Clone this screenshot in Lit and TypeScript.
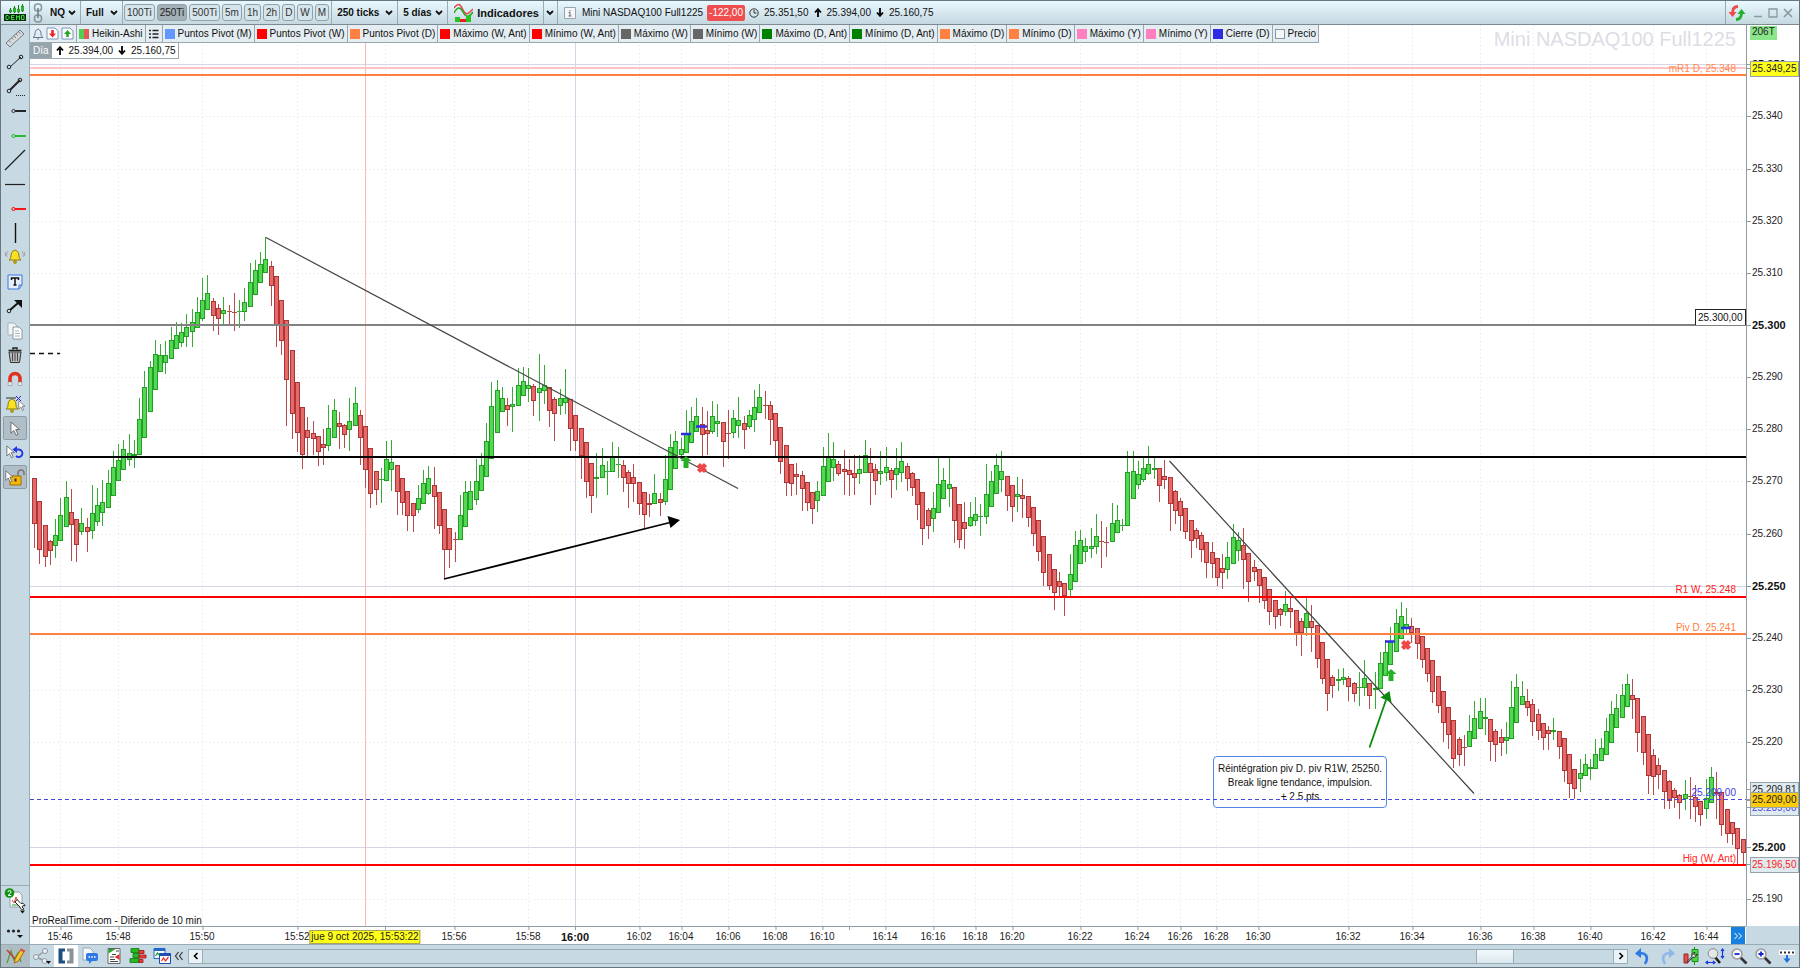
import { LitElement, html, svg, css } from "lit";
import { customElement } from "lit/decorators.js";
import { classMap } from "lit/directives/class-map.js";
import { styleMap } from "lit/directives/style-map.js";

/* Plot coordinate space shared by the canvas and the label overlays. */
const PLOT = { left: 30, top: 25, width: 1716, height: 901 };
const VIEWBOX = `${PLOT.left} ${PLOT.top} ${PLOT.width} ${PLOT.height}`;
const priceY = (price: number) => 325 + (25300 - price) * 5.215;
const px = (x: number) => `${((x - PLOT.left) / PLOT.width) * 100}%`;
const py = (y: number) => `${((y - PLOT.top) / PLOT.height) * 100}%`;

/* Heikin-Ashi bars: colour, high, body top, body bottom, low — in thirds of a unit below the block's top. */
const BLOCKS: { top: number; bars: string }[] = [
  {
    top: 220,
    bars: `r775,775,911,983 r843,843,989,1033 r916,916,1010,1040 r960,962,993,1035 g896,944,979,1013 g835,886,962,962
    g784,832,922,922 r806,877,914,1022 r896,898,976,1025 g863,910,937,944 r894,922,937,996 g796,880,932,957
    g803,855,906,917 g781,847,880,918 g751,790,863,863 g694,742,827,827 g672,720,784,784 g660,686,751,751
    g643,698,720,738 g660,701,709,743 g533,598,704,704 g452,500,653,653 g424,441,577,577 g359,402,509,509
    g373,405,455,455 g362,405,430,461 g322,359,416,416 g306,346,388,388 g308,337,368,380 g283,322,352,380
    g268,306,337,380 g232,275,323,323 g174,241,298,304 g165,219,269,269 r234,244,287,332 r253,264,296,346
    g231,269,281,314 r255,274,277,314 r218,275,278,332 g240,274,277,324 g204,247,275,302 g128,187,262,262
    g120,151,226,226 g95,132,188,188 g52,118,160,160 r123,137,197,257 r168,168,314,380 r241,241,363,405
    r300,300,481,617 r391,391,583,656 r487,487,638,695 r562,562,704,746 r590,631,653,709 r603,640,658,704
    r648,648,695,738 r627,672,683,735 g556,624,678,692 g538,571,653,653 r576,609,622,687 r612,615,644,684
    g534,603,630,692 g500,550,619,619 r571,585,653,735 r619,619,751,803 r683,683,822,864 r754,754,811,856
    g743,778,781,848 g662,717,782,782 g660,726,751,813 r736,736,816,886 r775,775,848,886 r812,812,889,932
    r848,850,889,935 g796,835,869,878 g751,790,853,853 g737,773,822,826 r741,796,832,926 r815,815,917,943
    r866,866,989,1076 r925,925,990,1044 r935,958,961,1025 g826,886,959,959 g784,816,922,922 g784,813,869,869
    g716,784,841,855`,
  },
  {
    top: 340,
    bars: `g340,374,454,454 g250,304,412,412 g125,199,357,357 g120,151,279,279 g142,174,217,217 r173,196,211,257
    g142,192,202,277 g84,136,199,199 g81,123,169,169 g84,136,146,186 r132,139,182,227 g43,145,160,243
    g75,136,152,191 r142,142,212,262 r172,177,222,302 g146,175,199,226 g88,174,188,223 r178,178,268,333
    r225,225,304,333 r264,264,349,417 r307,307,427,474 r368,368,469,518 g340,412,418,473 g325,374,415,415
    g362,393,396,465 g306,352,395,395 g322,372,375,415 r360,374,415,457 r390,397,433,503 r373,412,433,487
    r425,425,493,524 r457,457,524,564 r463,489,495,532 g402,460,492,492 r460,478,490,527 g344,418,485,494
    g283,321,451,451 g274,304,386,386 g295,328,344,348 g210,283,338,338 g201,244,310,310 g174,227,275,275
    r201,253,284,347 r213,270,283,344 g182,227,275,283 g193,243,251,290 r247,247,307,382 r210,279,282,357
    g210,235,279,293 g171,241,259,293 r229,250,271,327 g211,226,260,268 g151,200,241,276 g131,172,220,220
    r153,195,198,237 r183,196,241,314 r220,220,304,347 r262,262,367,402 r314,314,428,468 r371,371,433,468
    r370,402,412,466 r394,406,448,513 r427,427,490,513 r457,457,506,552 g424,454,482,515 g321,379,467,467
    g280,352,425,425 g307,357,385,424 r362,371,403,409 r331,386,397,466 r358,391,406,468 r346,400,413,465
    g346,388,403,433 g300,344,398,398 r323,370,400,495 r373,386,422,464`,
  },
  {
    top: 420,
    bars: `g93,152,163,194 g80,142,160,182 r145,150,180,233 g85,145,166,209 g66,124,158,185 r130,139,177,213
    r156,160,203,229 r178,178,256,299 r217,217,328,374 r263,271,317,357 g215,265,296,335 g112,193,280,280
    g144,181,236,236 g113,193,208,262 r202,202,304,368 r252,252,359,383 r247,305,326,388 g247,290,317,322
    g230,283,304,317 g252,289,292,347 g132,223,292,313 g153,184,260,260 g102,136,221,221 g94,153,180,215
    r167,169,227,272 r196,196,262,307 g170,223,230,277 r176,226,236,293 r229,229,293,322 r260,260,341,377
    r299,299,395,422 r347,347,458,497 r401,401,497,509 r448,448,518,569 r455,482,500,530 r490,490,527,587
    g401,463,509,527 g334,376,487,487 g331,359,433,433 g353,379,397,425 g325,377,388,413 g283,349,382,403
    r302,364,367,443 r322,366,368,412 g250,308,367,367 g254,299,338,338 g296,314,319,334 g94,156,317,317
    g94,153,236,236 g123,163,196,208 g113,145,179,185 g79,133,163,166 g113,145,149,178 r145,145,197,247
    r121,169,179,208 r172,172,253,332 r211,212,272,313 r235,244,287,332 r263,263,335,357 r299,299,362,413
    r323,331,356,383 r337,346,391,427 r367,367,428,473 r367,395,433,473 r415,415,473,497 r401,443,458,506
    g367,412,450,476`,
  },
  {
    top: 440,
    bars: `g253,292,373,373 g277,301,334,364 r265,316,359,446 r339,339,427,485 r361,380,395,424 r388,388,437,488
    r412,412,482,506 r446,446,516,556 r481,481,530,567 r503,506,524,559 g453,493,517,527 r472,505,516,563
    r511,511,580,617 r535,544,580,647 g472,520,565,589 r496,544,563,635 r556,556,657,683 r605,605,716,731
    r658,658,761,814 r706,710,738,774 g686,718,724,753 g683,710,721,734 r707,715,741,784 r727,730,761,787
    g695,742,745,797 g661,715,744,767 r730,730,767,806 g695,744,749,808 g637,670,746,746 g601,637,707,707
    g562,605,674,674 g508,550,637,637 g487,529,596,596 g505,552,565,580 r535,559,578,610 r565,565,611,656
    r589,589,661,683 r625,625,701,725 r661,661,755,788 r709,709,797,818 r752,752,850,905 r802,802,885,926
    r841,841,956,985 r892,898,944,978 r886,921,923,978 g824,874,921,921 g782,835,896,896 g773,814,866,866
    g773,832,838,884 r836,836,907,964 r866,872,916,965 r866,892,910,947 g847,892,902,943 g724,802,898,898
    g703,741,850,850 g724,769,795,795 r746,784,803,828 r778,791,845,887 r808,823,874,900 r848,848,895,930
    r857,871,883,930 g833,871,877,900 r874,874,920,958 r895,895,992,1025 r943,943,1031,1074 r986,986,1046,1078
    g958,1000,1017,1057`,
  },
  {
    top: 640,
    bars: `g342,372,409,409 g357,380,388,419 g298,341,386,386 g295,323,364,364 g233,274,344,344 g184,223,308,308
    g162,205,265,265 g131,166,235,235 g102,133,200,200 r118,166,181,238 r175,175,278,336 r228,228,338,376
    r282,282,409,461 r328,346,411,465 r353,376,406,446 r391,391,455,507 r421,423,482,507 r445,451,475,503
    r463,465,488,536 g419,463,476,511 r411,468,470,536 r436,472,502,545 r482,484,524,557 g416,473,506,536
    g381,411,490,490 r397,455,463,536 r455,457,554,587 r507,507,583,608 r545,545,583,614 r565,565,628,672
    r597,597,640,672`,
  },
];

interface Bar { up: boolean; x: number; high: number; top: number; bottom: number; low: number }

const BARS: Bar[] = BLOCKS.flatMap((block) =>
  block.bars.trim().split(/\s+/).map((token) => {
    const [high, top, bottom, low] = token.slice(1).split(",").map((v) => Math.round(block.top + Number(v) / 3));
    return { up: token[0] === "g", x: 0, high, top, bottom, low };
  }),
).map((bar, i) => ({ ...bar, x: Math.round(34 + i * 5.257) }));

const TIMES: [number, string][] = [
  [60, "15:46"], [118, "15:48"], [202, "15:50"], [297, "15:52"], [385, ""], [454, "15:56"], [528, "15:58"],
  [575, "16:00"], [639, "16:02"], [681, "16:04"], [728, "16:06"], [775, "16:08"], [822, "16:10"], [849, ""],
  [885, "16:14"], [933, "16:16"], [975, "16:18"], [1012, "16:20"], [1080, "16:22"], [1137, "16:24"],
  [1180, "16:26"], [1216, "16:28"], [1258, "16:30"], [1348, "16:32"], [1412, "16:34"], [1480, "16:36"],
  [1533, "16:38"], [1590, "16:40"], [1653, "16:42"], [1706, "16:44"],
];
const PRICES = Array.from({ length: 17 }, (_, i) => 25350 - i * 10);
const fmt = (price: number) => `25.${String(price - 25000)}`;

const LEGEND: [string, string][] = [
  ["Puntos Pivot (M)", "#6496ff"], ["Puntos Pivot (W)", "#ff0000"], ["Puntos Pivot (D)", "#ff8040"],
  ["Máximo (W, Ant)", "#ff0000"], ["Mínimo (W, Ant)", "#ff0000"], ["Máximo (W)", "#666666"],
  ["Mínimo (W)", "#666666"], ["Máximo (D, Ant)", "#008000"], ["Mínimo (D, Ant)", "#008000"],
  ["Máximo (D)", "#ff8040"], ["Mínimo (D)", "#ff8040"], ["Máximo (Y)", "#ff80c0"], ["Mínimo (Y)", "#ff80c0"],
  ["Cierre (D)", "#2c2ce0"], ["Precio", "transparent"],
];

const icon = (w: number, h: number, body: unknown) =>
  html`<svg width=${w} height=${h} viewBox="0 0 ${w} ${h}" fill="none" aria-hidden="true">${body}</svg>`;

const cursor = svg`<path d="M1 1v12l3-3 2.500 5 2-1-2.500-5h4z" fill="#fff" stroke="#666"/>`;
const bell = svg`<path d="M11 2c3 1 4 3 4 6 0 2 1 3 2 4H5c1-1 2-2 2-4 0-3 1-5 4-6z" fill="#fbe122" stroke="#8a7a10"/><circle cx="11" cy="14" r="1.500" fill="#c8a800" stroke="#8a7a10" stroke-width=".6"/>`;
const chevron = icon(8, 6, svg`<path d="M1 1l3 3 3-3" stroke="#111" stroke-width="1.800"/>`);
const arrowUp = icon(8, 9, svg`<path d="M4 9V3M1 4.500L4 1.200l3 3.300" stroke="#000" stroke-width="1.800"/>`);
const arrowDown = icon(8, 9, svg`<path d="M4 0v6M1 4.500l3 3.300 3-3.300" stroke="#000" stroke-width="1.800"/>`);

const TOOLS: { label: string; art: unknown; on?: boolean }[] = [
  { label: "Regla", art: icon(22, 22, svg`<path d="M2 16L16 3l4 4L6 20z" fill="#d5dade" stroke="#777"/><path d="M5 13.500l2 2M7.500 11l1.500 1.500M10 9l2 2M12 7l1.500 1.500M14.500 4.800l2 2" stroke="#777"/>`) },
  { label: "Segmento", art: icon(22, 22, svg`<path d="M6 16L17 6" stroke="#222"/><circle cx="5" cy="16" r="1.800" stroke="#222"/><circle cx="17" cy="6" r="1.800" stroke="#222"/>`) },
  { label: "Canal", art: icon(22, 22, svg`<path d="M6 14L16 4" stroke="#222" stroke-width="2"/><circle cx="5" cy="15" r="1.800" stroke="#222"/><circle cx="16" cy="4" r="1.800" stroke="#222"/><path d="M12 19.500h9" stroke="#222" stroke-dasharray="1 1"/>`) },
  { label: "Semirrecta", art: icon(22, 22, svg`<path d="M11 11h11" stroke="#111" stroke-width="1.800"/><circle cx="9.500" cy="11" r="1.600" stroke="#333"/>`) },
  { label: "Semirrecta verde", art: icon(22, 22, svg`<path d="M11 11h11" stroke="#1fb51f" stroke-width="1.800"/><circle cx="9.500" cy="11" r="1.600" stroke="#1fb51f"/>`) },
  { label: "Recta", art: icon(22, 22, svg`<path d="M1 21L21 1" stroke="#222" stroke-width="1.200"/>`) },
  { label: "Horizontal", art: icon(22, 22, svg`<path d="M1 11.500h20" stroke="#222" stroke-width="1.200"/>`) },
  { label: "Semirrecta roja", art: icon(22, 22, svg`<path d="M11 11h11" stroke="#f00" stroke-width="1.800"/><circle cx="9.500" cy="11" r="1.600" stroke="#f00"/>`) },
  { label: "Vertical", art: icon(22, 22, svg`<path d="M11.500 1v20" stroke="#111" stroke-width="1.400"/>`) },
  { label: "Alerta", art: icon(22, 18, svg`${bell}<path d="M4 3C2.500 5 2.500 7 3 9M1.500 4v4M18 3c1.500 2 1.500 4 1 6M20.500 4v4" stroke="#999" stroke-width=".8"/>`) },
  { label: "Texto", art: icon(22, 18, svg`<path d="M4 2h14v10l-3 4H4z" fill="#e4eefc" stroke="#3f74e0"/><path d="M18 12h-3v4" stroke="#3f74e0"/><path d="M7.500 7V5h7v2M11 5v7M9.500 12h3" stroke="#111" stroke-width="1.500"/>`) },
  { label: "Flecha", art: icon(22, 18, svg`<path d="M6 13l8-7" stroke="#111" stroke-width="2"/><path d="M10 3h8v8z" fill="#111"/><circle cx="5" cy="14" r="1.800" stroke="#222"/>`) },
  { label: "Copiar", art: icon(22, 18, svg`<path d="M4 1h6l3 3v9H4z" fill="#f2f5f7" stroke="#a7b2b9"/><path d="M9 5h6l3 3v9H9z" fill="#fff" stroke="#8c989f"/><path d="M11 9h4M11 11.500h5M11 14h5" stroke="#a7b2b9"/>`) },
  { label: "Eliminar", art: icon(22, 18, svg`<path d="M5 6h12l-1.500 10.500h-9z" fill="#bbb" stroke="#333"/><path d="M4.500 4.500h13M9 3.500V2h4v1.500" stroke="#222" stroke-width="1.500"/><path d="M8.500 7v8M11 7v8M13.500 7v8" stroke="#444"/>`) },
  { label: "Imán", art: icon(22, 18, svg`<path d="M6 12V8.500a5 5 0 0 1 10 0V12" stroke="#e0301f" stroke-width="3.600"/><path d="M4.200 12h3.600v3.500H4.200zM14.200 12h3.600v3.500h-3.600z" fill="#eee" stroke="#888" stroke-width=".6"/>`) },
  { label: "Alertas del gráfico", art: icon(22, 18, svg`<g transform="translate(-3 2)">${bell}</g><path d="M2 3h10" stroke="#333"/><path d="M12 1l5 5M17 1l-5 5" stroke="#22c"/><g transform="translate(14 5) scale(.7)">${cursor}</g>`) },
  { label: "Cursor", on: true, art: icon(22, 16, svg`<g transform="translate(6 1) scale(.95)">${cursor}</g>`) },
  { label: "Deshacer", art: icon(22, 16, svg`<g transform="translate(2 1) scale(.85)">${cursor}</g><path d="M10 5.500h5a3.800 3.800 0 1 1-3 6.500" stroke="#2433e8" stroke-width="1.900"/><path d="M13 2v7L8.500 5.500z" fill="#2433e8"/>`) },
  { label: "Bloquear", on: true, art: icon(22, 18, svg`<path d="M6 8h11v9H6z" fill="#f5b70c" stroke="#9c6f00"/><path d="M14 8V5a3 3 0 0 1 6 0v2" stroke="#777" stroke-width="1.600"/><path d="M11.500 10.500v3" stroke="#333" stroke-width="2"/><g transform="translate(1 2) scale(.8)">${cursor}</g>`) },
];

const lens = (extra: unknown) =>
  icon(18, 18, svg`<path d="M10.500 10.500l6 6" stroke="#333" stroke-width="2.600"/><circle cx="7" cy="7" r="5" fill="#f7f7f7" stroke="#999" stroke-width="1.500"/>${extra}`);

const BOTTOM_LEFT: { label: string; art: unknown; on?: boolean }[] = [
  { label: "Compartir", art: icon(20, 20, svg`<path d="M4 11l9-6M4 11l9 4" stroke="#8e9aa2" stroke-width="1.500"/><circle cx="4" cy="11" r="2.500" fill="#e8eef1" stroke="#8e9aa2"/><circle cx="13" cy="5" r="2.500" fill="#e8eef1" stroke="#8e9aa2"/><circle cx="12.500" cy="15" r="2.500" fill="#e8eef1" stroke="#8e9aa2"/><path d="M14 15h5l-2.500 3z" fill="#111"/>`) },
  { label: "Vista", on: true, art: icon(20, 20, svg`<path d="M9 2.500H2.500v15H9v-3H6.500v-9H9z" fill="#1d4f80"/><path d="M11 2.500h6.500v15H11v-3h2.500v-9H11z" fill="#8a9097"/>`) },
  { label: "Chat", art: icon(20, 20, svg`<path d="M3 2h7l3 3v9H3z" fill="#f6f9fb" stroke="#9aa8b0"/><rect x="6" y="7" width="12" height="8" rx="2" fill="#2f78e6"/><path d="M9 14v4l4-4z" fill="#2f78e6"/><path d="M8.500 11h1.500M11.300 11h1.500M14 11h1.500" stroke="#fff" stroke-width="1.500"/>`) },
  { label: "Noticias", art: icon(20, 20, svg`<path d="M4 2.500h12v15H4z" fill="#fff" stroke="#666"/><path d="M4.500 3h7l-7 4.500z" fill="#1ea51e"/><path d="M15.500 8v6l-5-3z" fill="#e03030"/><path d="M8 8.500h4M6 11h4M6 13.500h5M6 15.500h8M12 5h3" stroke="#444"/>`) },
  { label: "Libro de órdenes", art: icon(20, 20, svg`<path d="M3 2.500h8v4H3zM5 7.500h6v4H5zM2 12.500h9v4H2z" fill="#24b824" stroke="#0d7a0d" stroke-width=".8"/><path d="M11 4.500h5v3h-5zM11 9h7v3h-7zM11 13.500h4v3h-4z" fill="#e84040" stroke="#9a1010" stroke-width=".8"/>`) },
  { label: "Gráficos", art: icon(20, 20, svg`<path d="M2 2.500h11v10H2z" fill="#fff" stroke="#1e66c8"/><path d="M2 2.500h11v2.500H2z" fill="#1e66c8"/><path d="M3.500 10l2-3 2 2 2-2" stroke="#1ea51e" stroke-width="1.300"/><path d="M7.500 7.500h11v10h-11z" fill="#fff" stroke="#1e4fb0"/><path d="M7.500 7.500h11V10h-11z" fill="#1e4fb0"/><path d="M9.500 15l2-3 2 3 3-4" stroke="#e03030" stroke-width="1.300"/>`) },
];

const BOTTOM_RIGHT: { label: string; art: unknown }[] = [
  { label: "Deshacer", art: icon(18, 18, svg`<path d="M5 6.500c6-1 9 2 7.500 7.500-.3 1.200-1 2-2 2.500" stroke="#2b7ae6" stroke-width="2.600"/><path d="M7 1v10L1 6.500z" fill="#2b7ae6"/>`) },
  { label: "Rehacer", art: icon(18, 18, svg`<path d="M13 6.500c-6-1-9 2-7.500 7.500.3 1.200 1 2 2 2.500" stroke="#8fb8ea" stroke-width="2.600"/><path d="M11 1v10l6-4.500z" fill="#8fb8ea"/>`) },
  { label: "Configurar velas", art: icon(18, 18, svg`<path d="M2 7h4v9H2z" fill="#e25050" stroke="#a02020"/><path d="M12.500 0v18" stroke="#169016"/><path d="M10 2.500h6v12h-6z" fill="#49d649" stroke="#169016"/><path d="M5 14.500l5-5c-.5-2 .5-4 3-4L11.500 7l1.500 1.500L15 7c0 2.500-2 3.700-4 3.200l-5 5z" fill="#fff" stroke="#222"/>`) },
  { label: "Ajustar escala", art: icon(20, 18, svg`<path d="M10 10l5 6" stroke="#222" stroke-width="2.600"/><circle cx="8" cy="6.500" r="4.800" fill="#e6e6e6" stroke="#888"/><path d="M17.500 2v9M16 4l1.500-2L19 4M16 9l1.500 2L19 9M1 15.500h9M3 14l-2 1.500L3 17M8 14l2 1.500L8 17" stroke="#1a36e8" stroke-width="1.200"/>`) },
  { label: "Alejar", art: lens(svg`<path d="M4.500 7h5" stroke="#1226d8" stroke-width="1.800"/>`) },
  { label: "Acercar", art: lens(svg`<path d="M4.500 7h5M7 4.500v5" stroke="#1226d8" stroke-width="1.800"/>`) },
  { label: "Mostrar panel", art: icon(18, 18, svg`<path d="M1 3h16v5H1z" fill="#fff"/><path d="M2 5.500h15" stroke="#333" stroke-width="2" stroke-dasharray="2 2"/><path d="M9 8v5" stroke="#1e6fe0" stroke-width="2"/><path d="M5.500 11.500h7L9 16z" fill="#1e6fe0"/>`) },
];

const LEVELS: [number, string, number][] = [
  [68, "#ffc4c4", 2], [75, "#ff8040", 2], [325, "#828282", 2], [457, "#000", 2],
  [597, "#f00", 2], [634, "#ff8040", 2], [865, "#f00", 2],
];
const LEVEL_LABELS: [number, string, string][] = [
  [69, "mR1 D, 25.348", "#ff8a50"], [590, "R1 W, 25.248", "#f22"], [628, "Piv D. 25.241", "#ff8040"],
  [793, "25.209,00", "#3c3ce6"], [859, "Hig (W, Ant)", "#f22"],
];

@customElement("price-chart")
export class PriceChart extends LitElement {
  static styles = css`
    :host { position: relative; display: block; overflow: hidden; background: #fff; font: 10px/12px "Liberation Sans", Arial, sans-serif; color: #111; }
    .layer { position: absolute; inset: 0; width: 100%; height: 100%; }
    .label { position: absolute; right: 10px; transform: translateY(-50%); white-space: nowrap; }
    .watermark { position: absolute; top: 4px; right: 10px; font-size: 20px; line-height: 20px; color: #dcdde6; }
    .note { position: absolute; box-sizing: border-box; width: 174px; padding: 5px 0 3px; border: 1px solid #4f83e8; border-radius: 4px; background: #fff; line-height: 14px; text-align: center; }
    .tag { position: absolute; right: 0; box-sizing: border-box; width: 51px; padding: 2px 2px 1px; border: 1px solid #222; border-bottom: 0; background: #fff; transform: translateY(-100%); white-space: nowrap; }
    .source { position: absolute; left: 2px; bottom: 0; line-height: 10px; }
    .day { position: absolute; top: 17px; left: 0; display: flex; align-items: stretch; height: 15px; border: 1px solid #9aa7ae; border-left: 0; background: #fff; line-height: 15px; }
    .period { padding: 0 3px; background: #96a4ab; color: #fff; }
    .extremes { display: flex; align-items: center; gap: 5px; padding: 0 2px 0 4px; }
    .extremes svg { flex: none; }
    .grid { stroke: #e2e2e2; stroke-dasharray: 1 3; }
    .major { stroke: #d3d6e4; }
    .up { fill: #52d852; stroke: #249e24; }
    .down { fill: #e66a6a; stroke: #ac3636; }
    .wick-up { stroke: #38aa38; }
    .wick-down { stroke: #b84c4c; }
  `;

  private readonly bar = (b: Bar) => svg`
    <path class=${b.up ? "wick-up" : "wick-down"} d="M${b.x + 0.5} ${b.high}V${b.low}"/>
    ${b.bottom - b.top < 2
      ? svg`<path class=${b.up ? "wick-up" : "wick-down"} d="M${b.x - 2} ${b.top + 0.5}h5"/>`
      : svg`<rect class=${b.up ? "up" : "down"} x=${b.x - 1.5} y=${b.top + 0.5} width="4" height=${b.bottom - b.top - 1 || 1}/>`}`;

  private readonly entry = (x: number, y: number) =>
    svg`<path d="M${x} ${y - 6}l5.500 5h-3v7h-5v-7h-3z" fill="#26b026"/>`;

  private readonly exit = (x: number, y: number) =>
    svg`<path d="M${x - 3.5} ${y - 3.500}l7 7m0-7l-7 7" stroke="#f04848" stroke-width="4.500"/>`;

  render() {
    return html`
      <svg class="layer" viewBox=${VIEWBOX} preserveAspectRatio="none" shape-rendering="crispEdges" aria-hidden="true">
        ${PRICES.map((p) => svg`<path class=${p % 50 ? "grid" : "major"} d="M30 ${Math.round(priceY(p)) + 0.5}H1746"/>`)}
        ${TIMES.map(([x, t]) => svg`<path class=${t === "16:00" ? "major" : "grid"} d="M${x + 0.5} 25V926"/>`)}
      </svg>
      <div class="note" style=${styleMap({ left: px(1213), top: py(756) })}>Réintégration piv D. piv R1W, 25250.<br />Break ligne tendance, impulsion.<br />+ 2.5 pts</div>
      <svg class="layer" viewBox=${VIEWBOX} preserveAspectRatio="none" fill="none" role="img" aria-label="Mini NASDAQ100 Full1225, 250 ticks">
        <path d="M365.500 25V926" stroke="#ffb4b4"/>
        <path d="M30 353.500h30" stroke="#111" stroke-width="1.500" stroke-dasharray="5 4"/>
        <g shape-rendering="crispEdges">${BARS.map(this.bar)}</g>
        ${LEVELS.map(([y, color, w]) => svg`<path d="M30 ${w % 2 ? y + 0.5 : y}H1746" stroke=${color} stroke-width=${w}/>`)}
        <path d="M30 799.500H1746" stroke="#4646e0" stroke-dasharray="4 3"/>
        <path d="M266 237.500L738 488.500M1169.500 461L1474 793.500" stroke="#444" stroke-width="1.200"/>
        <path d="M444 579L672 522" stroke="#000" stroke-width="1.800"/>
        <path d="M680 520l-12.500-4 3 12z" fill="#000"/>
        <path d="M1369.500 747.500L1386 700" stroke="#0a8a0a" stroke-width="1.800"/>
        <path d="M1389.500 691l-9 6.500 11 5z" fill="#0a8a0a"/>
        <path d="M681 434h10M696 426.500h11M1385 641.500h10M1401 628h10" stroke="#2f2fe8" stroke-width="2.500"/>
        ${this.entry(686, 462)}${this.entry(1391, 675)}${this.exit(702, 468)}${this.exit(1406, 645)}
      </svg>
      ${LEVEL_LABELS.map(([y, text, color]) => html`<span class="label" style=${styleMap({ top: py(y), color })}>${text}</span>`)}
      <span class="tag" style=${styleMap({ top: py(325) })}>25.300,00</span>
      <span class="watermark">Mini NASDAQ100 Full1225</span>
      <span class="source">ProRealTime.com - Diferido de 10 min</span>
      <div class="day">
        <span class="period">Día</span>
        <span class="extremes">${arrowUp}<span>25.394,00</span>${arrowDown}<span>25.160,75</span></span>
      </div>
    `;
  }
}

@customElement("price-axis")
export class PriceAxis extends LitElement {
  static styles = css`
    :host { position: relative; display: block; border-left: 1px solid #8f9ca4; background: #fff; font: 10px/12px "Liberation Sans", Arial, sans-serif; color: #222; }
    .price { position: absolute; left: 5px; transform: translateY(-50%); }
    .price::before, .marker::before { content: ""; position: absolute; left: -5px; top: 6px; width: 4px; height: 1px; background: #8f9ca4; }
    .strong { font-size: 11px; font-weight: 700; color: #111; }
    .marker { position: absolute; left: 3px; right: 0; box-sizing: border-box; height: 16px; padding-left: 1px; border: 1px solid #96a3ab; background: #dfeaf0; line-height: 14px; white-space: nowrap; transform: translateY(-50%); }
    .yellow { background: #ffff18; color: #222; }
    .gold { background: #fccb0c; color: #222; }
    .blue { color: #4646e0; }
    .red { color: #f22; }
    .count { position: absolute; top: 1px; left: 3px; padding: 0 2px 2px; background: #8be58b; }
  `;

  private readonly marker = (y: number, text: string, tone: string) =>
    html`<span class="marker ${tone}" style=${styleMap({ top: py(y) })}>${text}</span>`;

  render() {
    return html`
      ${PRICES.map((p) => html`<span class=${classMap({ price: true, strong: p % 50 === 0 })} style=${styleMap({ top: py(priceY(p)) })}>${p === 25210 ? "" : fmt(p)}</span>`)}
      ${this.marker(790, "25.209,81", "")}
      ${this.marker(808, "25.209,00", "blue")}
      ${this.marker(800, "25.209,00", "gold")}
      ${this.marker(69, "25.349,25", "yellow")}
      ${this.marker(865, "25.196,50", "red")}
      <span class="count">206T</span>
    `;
  }
}

@customElement("time-axis")
export class TimeAxis extends LitElement {
  static styles = css`
    :host { position: relative; display: block; border-top: 1px solid #8f9ca4; background: #fff; font: 10px/12px "Liberation Sans", Arial, sans-serif; color: #222; }
    .time { position: absolute; top: 4px; transform: translateX(-50%); }
    .time::before { content: ""; position: absolute; left: 50%; top: -4px; width: 1px; height: 3px; background: #8f9ca4; }
    .strong { font-size: 11px; font-weight: 700; color: #111; }
    .moment { position: absolute; top: 3px; box-sizing: border-box; height: 14px; padding: 0 1px; border: 1px solid #a5a55a; background: #ffff18; color: #222; white-space: nowrap; transform: translateX(-50%); }
    .latest { position: absolute; top: 0; right: 1px; display: grid; place-items: center; width: 14px; height: 17px; padding: 0; border: 0; background: #1880e0; }
  `;

  render() {
    return html`
      ${TIMES.map(([x, t]) => html`<span class=${classMap({ time: true, strong: t === "16:00" })} style=${styleMap({ left: px(x) })}>${t}</span>`)}
      <span class="moment" style=${styleMap({ left: px(365) })}>jue 9 oct 2025, 15:53:22</span>
      <button class="latest" aria-label="Ir al final">${icon(10, 8, svg`<path d="M1.500 1l3 3-3 3M5.500 1l3 3-3 3" stroke="#fff"/>`)}</button>
    `;
  }
}

@customElement("app-root")
export class AppRoot extends LitElement {
  static styles = css`
    :host { display: block; font: 10px/12px "Liberation Sans", Arial, sans-serif; color: #111; }
    .window { display: grid; box-sizing: border-box; height: 100vh; grid-template: 24px minmax(0, 1fr) 18px 23px / 29px minmax(0, 1fr) 53px; border: 1px solid #67767f; background: #c7d9e2; }
    button, select, input { margin: 0; font: inherit; color: inherit; }
    svg { display: block; flex: none; }
    .bar { grid-column: 1 / -1; display: flex; align-items: stretch; border-bottom: 1px solid #7b8a93; background: linear-gradient(#e9f8ff, #c5d8e0); }
    .bar > * { border-right: 1px solid #9aabb4; }
    .brand { display: grid; place-items: center; box-sizing: border-box; width: 29px; }
    .plain { display: grid; place-items: center; padding: 0; border: 0; background: none; }
    .link { width: 15px; }
    .picker { display: grid; align-items: center; box-sizing: border-box; padding: 0 4px 0 5px; }
    .picker select { grid-area: 1 / 1; width: 100%; padding: 0; border: 0; appearance: none; background: none; font-weight: 700; }
    .picker svg { grid-area: 1 / 1; justify-self: end; pointer-events: none; }
    .w36 { width: 36px; }
    .w42 { width: 42px; }
    .w50 { width: 50px; }
    .w66 { width: 66px; }
    .frames { display: flex; align-items: center; gap: 2px; padding: 0 2px 0 1px; }
    .frame { box-sizing: border-box; height: 17px; padding: 0 2px; border: 1px solid #93a1a9; border-radius: 3px; background: #d5e5ec; color: #333; line-height: 15px; }
    .frame.on { background: #a3b0b7; color: #222; }
    .indicators { display: flex; align-items: center; gap: 4px; padding: 0 4px 0 6px; border-width: 0 1px 0 0; border-style: solid; background: none; font-size: 11px; font-weight: 700; }
    .more { width: 14px; border-right: 1px solid #9aabb4; }
    .quote { flex: 1; display: flex; align-items: center; gap: 5px; padding-left: 6px; }
    .info { margin-right: 1px; }
    .change { margin: 0 -1px; padding: 2px 2px; border-radius: 2px; background: #f04e4e; color: #fff; }
    .sync { width: 21px; }
    .controls { display: flex; align-items: center; border-right: 0; padding: 0 5px 0 5px; gap: 3px; }
    .controls .plain { width: 12px; height: 12px; }
    .tools { grid-row: 2 / 4; display: flex; flex-direction: column; justify-content: space-between; min-height: 0; box-sizing: border-box; border-right: 1px solid #9aabb4; background: #c7d9e2; }
    .drawing { flex: 0 1 464px; display: flex; flex-direction: column; justify-content: space-between; align-items: center; padding-top: 1px; box-sizing: border-box; }
    .tool { display: grid; place-items: center; box-sizing: border-box; width: 24px; height: 24px; padding: 0; border: 1px solid transparent; border-radius: 2px; background: none; }
    .tool.on { border-color: #8e9ca4; background: #b0bfc7; }
    .footer { display: flex; flex-direction: column; gap: 12px; align-items: center; height: 59px; padding-top: 2px; box-sizing: border-box; border-top: 1px solid #9aabb4; }
    .chart { position: relative; display: grid; min-width: 0; }
    .legend { position: absolute; top: 0; left: 0; display: flex; height: 17px; border-bottom: 1px solid #9aa7ae; background: #e4edf2; }
    .key { display: flex; align-items: center; gap: 3px; padding: 0 2px; border: 0; border-right: 1px solid #9aa7ae; background: none; white-space: nowrap; }
    .swatch { box-sizing: border-box; width: 10px; height: 10px; }
    .hollow { border: 1px solid #8795a0; background: #f4f7f9; }
    .split { background: linear-gradient(90deg, #4fd04f 50%, #e05a5a 50%); }
    .status { display: flex; align-items: center; gap: 2px; padding: 0 2px; border-right: 1px solid #9aa7ae; }
    .bottom { grid-column: 1 / -1; display: flex; align-items: stretch; border-top: 1px solid #9aabb4; background: #c7d9e2; }
    .draw { width: 29px; background: #aebcc4; }
    .icons { display: flex; }
    .slot { width: 24px; }
    .slot.on { background: #fff; }
    .expand { width: 10px; }
    .scroll { flex: 1; display: flex; align-items: center; min-width: 0; margin: 0 3px 0 4px; }
    .step { box-sizing: border-box; width: 15px; height: 15px; border: 1px solid #9aabb4; background: #e9f2f6; }
    .track { flex: 1; min-width: 0; box-sizing: border-box; height: 15px; border-style: solid; border-width: 1px 0; border-color: #9aabb4; appearance: none; background: #c7d9e2; }
    .track::-webkit-slider-thumb { appearance: none; box-sizing: border-box; width: 38px; height: 13px; border: 1px solid #9aabb4; border-width: 0 1px; background: linear-gradient(#f2f9fc, #dbe8ee); }
  `;

  private picker(name: string, value: string, size: string) {
    return html`<label class="picker ${size}"><select aria-label=${name}><option>${value}</option></select>${chevron}</label>`;
  }

  private topBar() {
    const frames = ["100Ti", "250Ti", "500Ti", "5m", "1h", "2h", "D", "W", "M"];
    return html`
      <header class="bar">
        <div class="brand">${icon(22, 18, svg`<path d="M6.500 4v5M10.500 2v7M14.500 1v8M18.500 0v8" stroke="#0a7a0a"/><path d="M5.500 6h2v2h-2zM9.500 4h2v4h-2zM13.500 5h2v3h-2zM17.500 2h2v5h-2z" fill="#23c423" stroke="#0a7a0a" stroke-width=".6"/><path d="M0 10h22v7H0z" fill="#0b2a0b"/><path d="M2 11.500v4h2l1-1v-2l-1-1zM10.500 11.500h-3v4h3M7.500 13.500h2.500M12.500 16v-4.500l1.500 2 1.500-2V16M17.500 11.500h2.500v4h-2.500z" stroke="#3be03b"/>`)}</div>
        <button class="plain link" aria-label="Vincular">${icon(10, 20, svg`<rect x="1.500" y="1" width="7" height="7" rx="3" stroke="#8b969c" stroke-width="1.500"/><rect x="1.500" y="12" width="7" height="7" rx="3" stroke="#8b969c" stroke-width="1.500"/><path d="M5 5v10" stroke="#70797e" stroke-width="1.500"/>`)}</button>
        ${this.picker("Valor", "NQ", "w36")}
        ${this.picker("Contrato", "Full", "w42")}
        <div class="frames">${frames.map((f) => html`<button class=${classMap({ frame: true, on: f === "250Ti" })}>${f}</button>`)}</div>
        ${this.picker("Unidad", "250 ticks", "w66")}
        ${this.picker("Histórico", "5 días", "w50")}
        <button class="indicators">${icon(19, 20, svg`<path d="M0 5c4-5 6-5 9 2s6 3 10-1" stroke="#e04545" stroke-width="1.500"/><path d="M0 10c3-6 6-7 9-1s7 5 10 0" stroke="#23a823" stroke-width="1.500"/><path d="M1 14h5v5H1zM12 13h5v6h-5z" fill="#23c423"/><path d="M6 16h6v3H6z" fill="#f01818"/>`)}Indicadores</button>
        <button class="plain more" aria-label="Más indicadores">${chevron}</button>
        <div class="quote">
          <span class="info">${icon(12, 12, svg`<path d="M.5.500h11v11H.5z" fill="#f4f8fa" stroke="#9aa5ab"/><path d="M6 3v1.300M4.700 5.500H6V9M4.500 9h3" stroke="#666"/>`)}</span>
          <span>Mini NASDAQ100 Full1225</span>
          <span class="change">-122,00</span>
          ${icon(10, 10, svg`<circle cx="5" cy="5" r="4.200" stroke="#333"/><path d="M5 2v3h2.500" stroke="#333"/>`)}
          <span>25.351,50</span>${arrowUp}<span>25.394,00</span>${arrowDown}<span>25.160,75</span>
        </div>
        <button class="plain sync" aria-label="Sincronizar">${icon(18, 18, svg`<path d="M10 2.500C6.500 2.500 4.500 5 4.500 9" stroke="#f04a4a" stroke-width="2.800"/><path d="M.5 8h8l-4 5z" fill="#f04a4a"/><path d="M8 15.500c3.500 0 5.500-2.500 5.500-6.500" stroke="#20b030" stroke-width="2.800"/><path d="M9.500 10h8l-4-5z" fill="#20b030"/>`)}</button>
        <div class="controls">
          <button class="plain" aria-label="Minimizar">${icon(10, 10, svg`<path d="M1 8.500h8" stroke="#8c999f" stroke-width="1.500"/>`)}</button>
          <button class="plain" aria-label="Maximizar">${icon(10, 10, svg`<path d="M1 1h8v8H1z" stroke="#8c999f" stroke-width="1.300"/>`)}</button>
          <button class="plain" aria-label="Cerrar">${icon(10, 10, svg`<path d="M1 1l8 8M9 1L1 9" stroke="#8c999f" stroke-width="1.700"/>`)}</button>
        </div>
      </header>
    `;
  }

  private legend() {
    return html`
      <div class="legend">
        <span class="status">
          ${icon(12, 12, svg`<path d="M6 1c2.500 1 3 3 3 5s1 2.500 2 3.500H1C2 8.500 3 8 3 6s.5-4 3-5zM5 11h2" stroke="#5a7a94"/>`)}
          ${icon(13, 13, svg`<path d="M1 1h8l3 3v8H1z" fill="#fff" stroke="#7a94bb"/><path d="M6.500 3v4" stroke="#f02020" stroke-width="2.500"/><path d="M3 6.500h7l-3.500 4z" fill="#f02020"/>`)}
          ${icon(13, 13, svg`<path d="M1 1h8l3 3v8H1z" fill="#fff" stroke="#7a94bb"/><path d="M6.500 6v4" stroke="#1da81d" stroke-width="2.500"/><path d="M3 7h7L6.500 3z" fill="#1da81d"/>`)}
        </span>
        <button class="key"><span class="swatch split"></span>Heikin-Ashi</button>
        <button class="key" aria-label="Lista">${icon(12, 10, svg`<path d="M1 1.500h2M1 5h2M1 8.500h2M4.500 1.500h6M4.500 5h6M4.500 8.500h6" stroke="#222" stroke-width="1.300"/>`)}</button>
        ${LEGEND.map(([name, color]) => html`
          <button class="key"><span class=${classMap({ swatch: true, hollow: color === "transparent" })} style=${color === "transparent" ? "" : styleMap({ background: color })}></span>${name}</button>`)}
      </div>
    `;
  }

  render() {
    return html`
      <main class="window">
        ${this.topBar()}
        <nav class="tools" aria-label="Herramientas de dibujo">
          <div class="drawing">${TOOLS.map((t) => html`<button class=${classMap({ tool: true, on: !!t.on })} aria-label=${t.label}>${t.art}</button>`)}</div>
          <div class="footer">
            <button class="plain" aria-label="Informes">${icon(22, 26, svg`<path d="M6 4h9l3 3v12H6z" fill="#fafcfd" stroke="#93a0a8"/><path d="M8 12l2 3 2-6 2 4" stroke="#e04545"/><path d="M8 17h7" stroke="#22a022"/><path d="M11 14l5 5c0 2 2 3 4 2l-2-2 1-1.500 2 .5c0-2-2-3-4-2.500l-4-4z" fill="#fff" stroke="#222"/><circle cx="5.500" cy="5" r="4.800" fill="#129412"/><path d="M4 4q0-1.500 1.500-1.500T7 4q0 1-3 3.500h3.200" stroke="#fff"/><path d="M16 22.500h5l-2.500 3z" fill="#111"/>`)}</button>
            <button class="plain" aria-label="Más herramientas">${icon(22, 14, svg`<circle cx="4.500" cy="5" r="1.600" fill="#222"/><circle cx="9.500" cy="5" r="1.600" fill="#222"/><circle cx="14.500" cy="5" r="1.600" fill="#222"/><path d="M13 9h6l-3 3z" fill="#111"/>`)}</button>
          </div>
        </nav>
        <section class="chart"><price-chart></price-chart>${this.legend()}</section>
        <price-axis></price-axis>
        <time-axis></time-axis>
        <footer class="bottom">
          <button class="plain draw" aria-label="Dibujar">${icon(20, 20, svg`<path d="M1 17L5 5l3 9 4-7 3 9" stroke="#4d9a3d" stroke-width="1.200"/><path d="M1 4l9 10" stroke="#c33" stroke-width="1.500"/><path d="M9 13l6-10 3.500 2-6 10-4 2z" fill="#f7c52c" stroke="#9a6d12"/><path d="M14.500 3.500l4 2" stroke="#e05050" stroke-width="2"/>`)}</button>
          <div class="icons">${BOTTOM_LEFT.map((b) => html`<button class=${classMap({ plain: true, slot: true, on: !!b.on })} aria-label=${b.label}>${b.art}</button>`)}</div>
          <button class="plain expand" aria-label="Contraer">${icon(10, 10, svg`<path d="M4.500 1l-3 4 3 4M8.500 1l-3 4 3 4" stroke="#333" stroke-width="1.200"/>`)}</button>
          <div class="scroll">
            <button class="plain step" aria-label="Anterior">${icon(6, 8, svg`<path d="M4.500 1l-3 3 3 3" stroke="#000" stroke-width="1.600"/>`)}</button>
            <input class="track" type="range" aria-label="Desplazamiento" min="0" max="1000" value="928" />
            <button class="plain step" aria-label="Siguiente">${icon(6, 8, svg`<path d="M1.500 1l3 3-3 3" stroke="#000" stroke-width="1.600"/>`)}</button>
          </div>
          <div class="icons">${BOTTOM_RIGHT.map((b) => html`<button class="plain slot" aria-label=${b.label}>${b.art}</button>`)}</div>
        </footer>
      </main>
    `;
  }
}
